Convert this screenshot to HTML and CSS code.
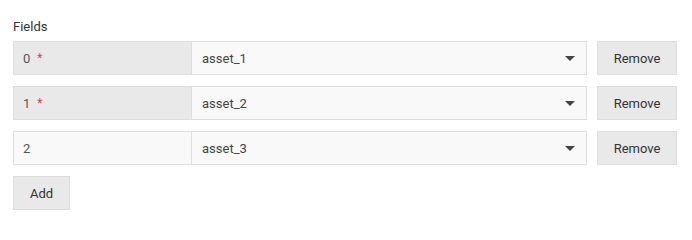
FILE: index.html
```html
<!DOCTYPE html>
<html>
<head>
<meta charset="utf-8">
<link rel="stylesheet" href="styles.css">
</head>
<body>
<div class="form">
  <div class="form-label">Fields</div>
  <div class="row">
    <div class="field">
      <div class="key key-locked">0 <span class="req">*</span></div>
      <div class="select"><span class="value">asset_1</span><span class="caret"></span></div>
    </div>
    <button class="btn btn-remove">Remove</button>
  </div>
  <div class="row">
    <div class="field">
      <div class="key key-locked">1 <span class="req">*</span></div>
      <div class="select"><span class="value">asset_2</span><span class="caret"></span></div>
    </div>
    <button class="btn btn-remove">Remove</button>
  </div>
  <div class="row">
    <div class="field">
      <div class="key">2</div>
      <div class="select"><span class="value">asset_3</span><span class="caret"></span></div>
    </div>
    <button class="btn btn-remove">Remove</button>
  </div>
  <button class="btn btn-add">Add</button>
</div>
</body>
</html>
```
FILE: styles.css
```css
html, body {
  margin: 0;
  padding: 0;
  background: #ffffff;
}
body {
  font-family: Roboto, "Liberation Sans", sans-serif;
  font-size: 13px;
  color: #444;
}
.form {
  padding: 19px 15px 0 13px;
}
.form-label {
  line-height: 16px;
  color: #333;
  margin-bottom: 6px;
}
.row {
  display: flex;
  gap: 10px;
  margin-bottom: 11px;
}
.field {
  flex: 1;
  display: flex;
  height: 34px;
  box-sizing: border-box;
  border: 1px solid #dedede;
  background: #f9f9f9;
}
.key {
  width: 178px;
  box-sizing: border-box;
  border-right: 1px solid #dedede;
  padding-left: 9px;
  display: flex;
  align-items: center;
  color: #555;
  background: #f9f9f9;
}
.key-locked {
  background: #e9e9e9;
}
.req {
  color: #e8384f;
  margin-left: 7px;
  font-size: 12px;
}
.select {
  flex: 1;
  display: flex;
  align-items: center;
  justify-content: space-between;
  padding: 0 11px 0 10px;
  color: #444;
}
.caret {
  width: 0;
  height: 0;
  border-left: 5px solid transparent;
  border-right: 5px solid transparent;
  border-top: 5px solid #444;
  margin-top: 1px;
}
.btn {
  font-family: Roboto, "Liberation Sans", sans-serif;
  font-size: 13px;
  color: #333;
  background: #e9e9e9;
  border: 1px solid #dedede;
  height: 34px;
  box-sizing: border-box;
  padding: 0;
  margin: 0;
  cursor: pointer;
}
.btn-remove {
  width: 80px;
}
.btn-add {
  width: 57px;
}
```
